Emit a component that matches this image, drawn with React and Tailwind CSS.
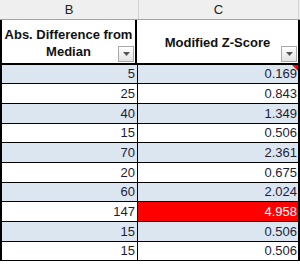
import React from 'react';

const rows = [
  { b: '5', c: '0.169', fill: true, h: 'h-[19px]', note: true },
  { b: '25', c: '0.843', fill: false, h: 'h-[20px]' },
  { b: '40', c: '1.349', fill: true, h: 'h-[20px]' },
  { b: '15', c: '0.506', fill: false, h: 'h-[19px]' },
  { b: '70', c: '2.361', fill: true, h: 'h-[20px]' },
  { b: '20', c: '0.675', fill: false, h: 'h-[20px]' },
  { b: '60', c: '2.024', fill: true, h: 'h-[19px]' },
  { b: '147', c: '4.958', fill: false, h: 'h-[20px]', red: true },
  { b: '15', c: '0.506', fill: true, h: 'h-[20px]' },
  { b: '15', c: '0.506', fill: false, h: 'h-[19px]' },
];

const FilterButton = () => (
  <div className="absolute right-[1px] bottom-[1px] w-[16px] h-[16px] border border-[#a9a9a9] bg-gradient-to-b from-white to-[#e3e3e3] flex items-center justify-center">
    <svg width="7" height="4" viewBox="0 0 7 4">
      <polygon points="0,0 7,0 3.5,4" fill="#555" />
    </svg>
  </div>
);

export default function App() {
  return (
    <div className="w-[300px] h-[267px] overflow-hidden bg-white font-['Liberation_Sans',Arial,sans-serif] text-[13px]">
      {/* column letters */}
      <div className="flex h-[20px] bg-[#efefef] border-b border-[#a3a3a3] text-[#222]">
        <div className="w-[138px] flex items-center justify-center">B</div>
        <div className="w-px bg-[#d2d2d2]" />
        <div className="flex-1 flex items-center justify-center">C</div>
        <div className="w-px bg-[#d2d2d2]" />
        <div className="w-[1px]" />
      </div>

      <div className="border-l-2 border-r-2 border-black w-[300px]">
        {/* header cells */}
        <div className="flex h-[45px] border-b-2 border-black font-bold text-[#111]">
          <div className="relative w-[135px] border-r-2 border-black flex items-center justify-center text-center leading-[17px] pt-[3px]">
            <span>
              Abs. Difference from
              <br />
              Median
            </span>
            <FilterButton />
          </div>
          <div className="relative flex-1 flex items-center justify-center pt-[3px]">
            Modified Z-Score
            <FilterButton />
          </div>
        </div>

        {rows.map((r, i) => (
          <div key={i} className={`flex ${r.h} border-b border-black text-[#1c1c38]`}>
            <div
              className={`w-[136px] border-r border-black flex items-center justify-end pr-[2px] ${
                r.fill ? 'bg-[#dce6f1]' : 'bg-white'
              }`}
            >
              {r.b}
            </div>
            <div
              className={`relative flex-1 flex items-center justify-end pr-[1px] ${
                r.red ? 'bg-[#ff0000] text-white' : r.fill ? 'bg-[#dce6f1]' : 'bg-white'
              }`}
            >
              {r.c}
              {r.note && (
                <div className="absolute top-0 right-0 w-0 h-0 border-l-[6px] border-l-transparent border-t-[6px] border-t-[#ff0000]" />
              )}
            </div>
          </div>
        ))}
      </div>
    </div>
  );
}
